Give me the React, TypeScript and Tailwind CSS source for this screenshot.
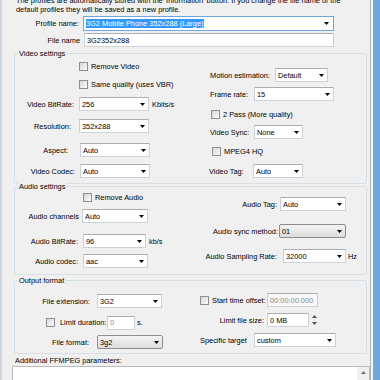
import React from 'react';

// Win7-style "edit profile" dialog, scaled down

const Arrow = ({ up = false, color = '#000' }: { up?: boolean; color?: string }) => (
  <svg width="5" height="3" viewBox="0 0 5 3" className="shrink-0">
    <path d={up ? 'M0 3h5L2.5 0z' : 'M0 0h5L2.5 3z'} fill={color} />
  </svg>
);

const Box = () => (
  <span className="w-[9px] h-[9px] shrink-0 border border-[#8f8f8f] bg-linear-to-br from-[#d8d8d8] to-[#fafafa]" />
);

const Check = ({ label, className = '' }: { label: string; className?: string }) => (
  <div className={`flex items-center h-[9px] ${className}`}>
    <Box />
    <span className="ml-[3px]">{label}</span>
  </div>
);

const Row = ({ children, className = '' }: { children: React.ReactNode; className?: string }) => (
  <div className={`flex items-center h-[14px] ${className}`}>{children}</div>
);

const Combo = ({ value, className = '', gray = false }: { value: string; className?: string; gray?: boolean }) => (
  <div
    className={`flex items-center h-[14px] pl-[2px] pr-[3px] border shrink-0 ${
      gray
        ? 'rounded-[2px] border-[#8d8d8d] bg-linear-to-b from-[#f4f4f4] to-[#dcdcdc]'
        : 'border-[#cdd1d6] border-t-[#abadb3] bg-white'
    } ${className}`}
  >
    <span className="flex-1 truncate">{value}</span>
    <Arrow />
  </div>
);

const Field = ({ value, className = '' }: { value: string; className?: string }) => (
  <div className={`flex items-center h-[14px] pl-[2px] border border-[#cdd1d6] border-t-[#abadb3] shrink-0 ${className}`}>
    {value}
  </div>
);

const Group = ({ title, className = '', children }: { title: string; className?: string; children: React.ReactNode }) => (
  <div className={`ml-[12px] w-[353px] border border-[#d5dfe5] rounded-[3px] ${className}`}>
    <div className="-mt-[5px] ml-[3px] px-[1px] w-fit bg-[#f0f0f0] leading-[9px]">{title}</div>
    <div className="flex">{children}</div>
  </div>
);

export default function App() {
  return (
    <div className="w-[380px] h-[380px] overflow-hidden flex bg-[#f0f0f0] text-black text-[7.4px] leading-[9px] font-['Liberation_Sans',Arial,sans-serif]">
      <div className="w-[2px] shrink-0 bg-[#cfd8e2]" />

      <div className="w-[368px] shrink-0 flex flex-col overflow-hidden">
        <div className="pl-[14px] -mt-[4px] whitespace-nowrap">
          <div>The profiles are automatically stored with the 'Information' button. If you change the file name of the</div>
          <div>default profiles they will be saved as a new profile.</div>
        </div>

        <div className="mt-[2px] flex items-center h-[15px]">
          <span className="w-[77px] text-right shrink-0">Profile name:</span>
          <div className="ml-[4px] w-[251px] h-[15px] flex items-center pl-[2px] pr-[4px] border border-[#6ea7df] bg-white">
            <span className="flex-1">
              <span className="bg-[#3399ff] text-white">3G2 Mobile Phone 352x288 (Large)</span>
            </span>
            <Arrow />
          </div>
        </div>

        <div className="mt-[2px] flex items-center h-[14px]">
          <span className="w-[78px] text-right shrink-0">File name</span>
          <Field value="3G2352x288" className="ml-[4px] w-[250px] bg-white" />
        </div>

        {/* Video */}
        <Group title="Video settings" className="mt-[6px] pb-[5px]">
          <div className="flex flex-col w-[185px] shrink-0">
            <Check label="Remove Video" className="mt-[4px] ml-[64px]" />
            <Check label="Same quality (uses VBR)" className="mt-[9px] ml-[64px]" />
            <Row className="mt-[8px]">
              <span className="w-[59px] text-right shrink-0">Video BitRate:</span>
              <Combo value="256" className="ml-[5px] w-[70px]" />
              <span className="ml-[3px]">Kbits/s</span>
            </Row>
            <Row className="mt-[8px]">
              <span className="w-[56px] text-right shrink-0">Resolution:</span>
              <Combo value="352x288" className="ml-[8px] w-[70px]" />
            </Row>
            <Row className="mt-[10px]">
              <span className="w-[53px] text-right shrink-0">Aspect:</span>
              <Combo value="Auto" className="ml-[12px] w-[70px]" />
            </Row>
            <Row className="mt-[7px]">
              <span className="w-[60px] text-right shrink-0">Video Codec:</span>
              <Combo value="Auto" className="ml-[5px] w-[70px]" />
            </Row>
          </div>
          <div className="flex flex-col flex-1">
            <Row className="mt-[10px] pl-[10px]">
              <span className="w-[65px] shrink-0">Motion estimation:</span>
              <Combo value="Default" className="w-[53px]" />
            </Row>
            <Row className="mt-[5px] pl-[10px]">
              <span className="w-[44px] shrink-0">Frame rate:</span>
              <Combo value="15" className="w-[80px]" />
            </Row>
            <Check label="2 Pass (More quality)" className="mt-[9px] ml-[11px]" />
            <Row className="mt-[6px] pl-[10px]">
              <span className="w-[44px] shrink-0">Video Sync:</span>
              <Combo value="None" className="w-[49px]" />
            </Row>
            <Check label="MPEG4 HQ" className="mt-[8px] ml-[12px]" />
            <Row className="mt-[8px] pl-[9px]">
              <span className="w-[44px] shrink-0">Video Tag:</span>
              <Combo value="Auto" className="w-[50px]" />
            </Row>
          </div>
        </Group>

        {/* Audio */}
        <Group title="Audio settings" className="mt-[2px] pb-[6px]">
          <div className="flex flex-col w-[185px] shrink-0">
            <Check label="Remove Audio" className="mt-[2px] ml-[68px]" />
            <Row className="mt-[7px]">
              <span className="w-[64px] text-right shrink-0">Audio channels</span>
              <Combo value="Auto" className="ml-[3px] w-[66px]" />
            </Row>
            <Row className="mt-[11px]">
              <span className="w-[63px] text-right shrink-0">Audio BitRate:</span>
              <Combo value="96" className="ml-[5px] w-[63px]" />
              <span className="ml-[3px]">kb/s</span>
            </Row>
            <Row className="mt-[6px]">
              <span className="w-[63px] text-right shrink-0">Audio codec:</span>
              <Combo value="aac" className="ml-[5px] w-[65px]" />
            </Row>
          </div>
          <div className="flex flex-col flex-1">
            <Row className="mt-[6px]">
              <span className="w-[77px] text-right shrink-0">Audio Tag:</span>
              <Combo value="Auto" className="ml-[3px] w-[66px]" />
            </Row>
            <Row className="mt-[13px]">
              <span className="w-[78px] text-right shrink-0">Audio sync method:</span>
              <Combo value="01" gray className="ml-[1px] w-[67px]" />
            </Row>
            <Row className="mt-[11px]">
              <span className="w-[77px] text-right shrink-0">Audio Sampling Rate:</span>
              <Combo value="32000" className="ml-[6px] w-[63px]" />
              <span className="ml-[2px]">Hz</span>
            </Row>
          </div>
        </Group>

        {/* Output */}
        <Group title="Output format" className="mt-[5px] pb-[4px]">
          <div className="flex flex-col w-[185px] shrink-0">
            <Row className="mt-[9px]">
              <span className="w-[75px] text-right shrink-0">File extension:</span>
              <Combo value="3G2" className="ml-[7px] w-[65px]" />
            </Row>
            <div className="mt-[8px] flex items-center h-[13px]">
              <span className="ml-[31px] flex"><Box /></span>
              <span className="ml-[5px] w-[47px] shrink-0">Limit duration:</span>
              <Field value="0" className="h-[13px] w-[28px] bg-white text-[#8a8a8a]" />
              <span className="ml-[2px]">s.</span>
            </div>
            <Row className="mt-[6px]">
              <span className="w-[74px] text-right shrink-0">File format:</span>
              <Combo value="3g2" gray className="ml-[8px] w-[66px]" />
            </Row>
          </div>
          <div className="flex flex-col flex-1">
            <Row className="mt-[8px]">
              <Box />
              <span className="ml-[3px] w-[55px] shrink-0">Start time offset:</span>
              <Field value="00:00:00.000" className="w-[51px] bg-[#f8f8f8] text-[#8a8a8a]" />
            </Row>
            <Row className="mt-[6px]">
              <span className="w-[64px] text-right shrink-0">Limit file size:</span>
              <Field value="0 MB" className="ml-[3px] w-[42px] bg-white" />
              <div className="ml-[3px] flex flex-col gap-[4px]">
                <Arrow up color="#555" />
                <Arrow color="#555" />
              </div>
            </Row>
            <Row className="mt-[6px]">
              <span className="w-[54px] shrink-0">Specific target</span>
              <Combo value="custom" className="w-[82px]" />
            </Row>
          </div>
        </Group>

        <div className="mt-[2px] pl-[13px]">Additional FFMPEG parameters:</div>
        <div className="mt-[1px] ml-[10px] w-[358px] h-[30px] shrink-0 border border-[#b9bcc1] bg-white flex justify-end">
          <div className="w-[12px] bg-[#f0f0f0] flex justify-center pt-[4px]">
            <Arrow up color="#707070" />
          </div>
        </div>
      </div>

      <div className="w-[1px] shrink-0 bg-[#aab4bd]" />
      <div className="w-[2px] shrink-0 bg-[#f4f8fc]" />
      <div className="flex-1 bg-[#6fa8dc]" />
    </div>
  );
}
